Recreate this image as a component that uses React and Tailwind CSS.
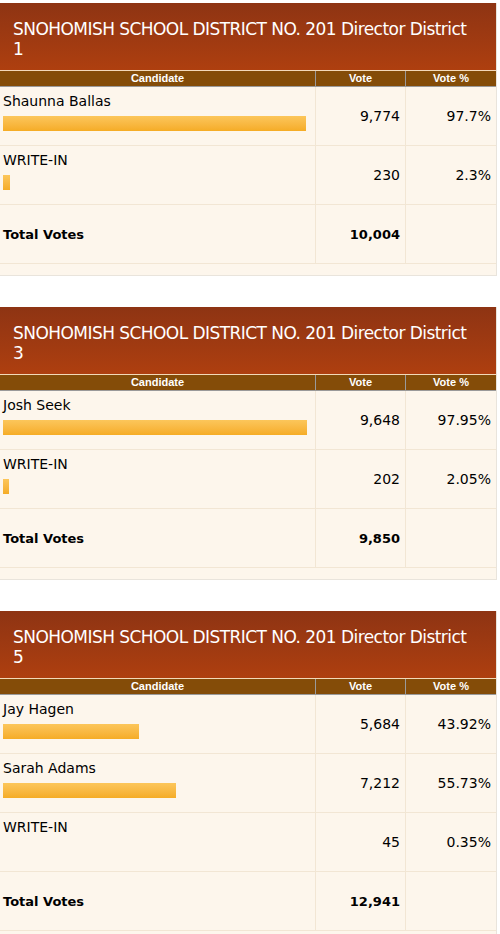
import React from "react";

const races = [
  {
    title: "SNOHOMISH SCHOOL DISTRICT NO. 201 Director District 1",
    rows: [
      { name: "Shaunna Ballas", votes: "9,774", pct: "97.7%", p: 97.7 },
      { name: "WRITE-IN", votes: "230", pct: "2.3%", p: 2.3 },
    ],
    total: "10,004",
  },
  {
    title: "SNOHOMISH SCHOOL DISTRICT NO. 201 Director District 3",
    rows: [
      { name: "Josh Seek", votes: "9,648", pct: "97.95%", p: 97.95 },
      { name: "WRITE-IN", votes: "202", pct: "2.05%", p: 2.05 },
    ],
    total: "9,850",
  },
  {
    title: "SNOHOMISH SCHOOL DISTRICT NO. 201 Director District 5",
    rows: [
      { name: "Jay Hagen", votes: "5,684", pct: "43.92%", p: 43.92 },
      { name: "Sarah Adams", votes: "7,212", pct: "55.73%", p: 55.73 },
      { name: "WRITE-IN", votes: "45", pct: "0.35%", p: 0.35 },
    ],
    total: "12,941",
  },
];

const font = { fontFamily: '"DejaVu Sans", Verdana, sans-serif' };

function Race({ race }) {
  return (
    <div className="w-[497px] border-r border-b border-[#e9e4dc] bg-[#fdf6ec]">
      <div
        className="h-[67px] bg-gradient-to-b from-[#8e3413] to-[#ae3f0f] pl-[13px] pr-[20px] pt-[16px] text-[17px] leading-[20px] tracking-[-0.55px] text-white"
        style={font}
      >
        {race.title}
      </div>
      <div className="border-t border-[#f3d9b8] grid grid-cols-[316px_90px_90px] h-[17px] bg-[#844c08] border-b border-b-[#9a9a9a] text-[11px] font-bold leading-[15px] text-white [font-family:'Liberation_Sans',Arial,sans-serif]">
        <div className="text-center border-r border-[#9a9a9a]">Candidate</div>
        <div className="text-center border-r border-[#9a9a9a]">Vote</div>
        <div className="text-center">Vote %</div>
      </div>
      {race.rows.map((r, i) => (
        <div
          key={i}
          className="grid grid-cols-[316px_90px_90px] h-[59px] border-b border-[#f2e6d4] text-[14px] text-black"
          style={font}
        >
          <div className="border-r border-[#f2e6d4] px-[3px] pt-[4px]">
            <div className="leading-[20px]">{r.name}</div>
            <div className="mt-[5px] h-[15px] w-[310px]">
              <div
                className="h-full bg-gradient-to-b from-[#fcc65a] to-[#f5ac25]"
                style={{ width: `${r.p < 1 ? 0 : Math.round((r.p / 100) * 310)}px` }}
              />
            </div>
          </div>
          <div className="border-r border-[#f2e6d4] flex items-center justify-end pr-[5px] pt-[1px]">
            {r.votes}
          </div>
          <div className="flex items-center justify-end pr-[5px] pt-[1px]">{r.pct}</div>
        </div>
      ))}
      <div
        className="grid grid-cols-[316px_90px_90px] h-[59px] border-b border-[#f2e6d4] text-[13px] font-bold text-black"
        style={font}
      >
        <div className="border-r border-[#f2e6d4] flex items-center px-[3px] pt-[1px]">Total Votes</div>
        <div className="border-r border-[#f2e6d4] flex items-center justify-end pr-[5px] pt-[1px]">
          {race.total}
        </div>
        <div />
      </div>
      <div className="h-[11px]" />
    </div>
  );
}

export default function App() {
  return (
    <div className="bg-white pt-[3px] w-[500px] flex flex-col gap-[31px]">
      {races.map((r, i) => (
        <Race key={i} race={r} />
      ))}
    </div>
  );
}
